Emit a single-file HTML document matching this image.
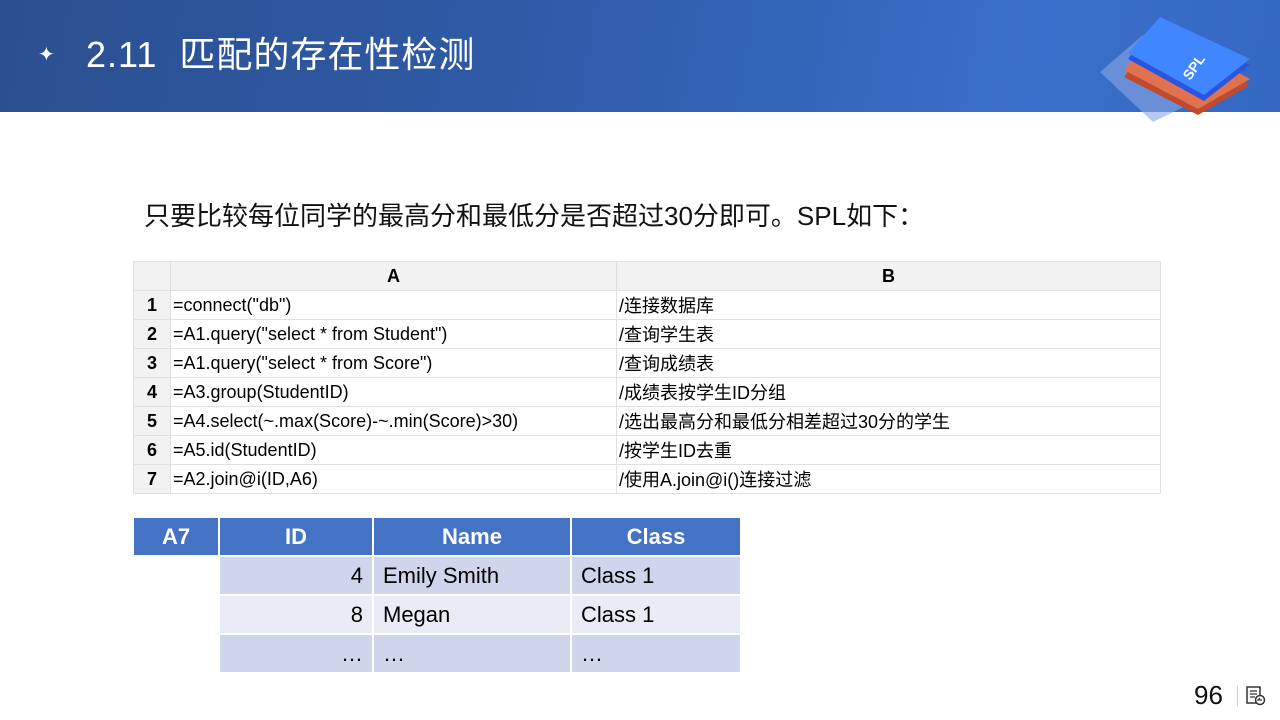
<!DOCTYPE html>
<html><head><meta charset="utf-8"><style>
*{margin:0;padding:0;box-sizing:border-box}
body{width:1280px;height:720px;position:relative;background:#fff;font-family:"Liberation Sans","Noto Sans CJK SC",sans-serif;overflow:hidden}
.hdr{position:absolute;left:0;top:0;width:1280px;height:112px;background:linear-gradient(100deg,#2b5090 0%,#2f5aa6 40%,#3a6fca 80%,#3468c2 100%)}
.title{position:absolute;left:86px;top:26px;color:#fff;font-size:36px;letter-spacing:1px}
.star{position:absolute;left:38px;top:42px;color:#fff;font-size:20px}
.intro{position:absolute;left:144px;top:196px;font-size:26px;color:#111}
.g{position:absolute;left:133px;top:261px;border-collapse:collapse;font-size:18px;color:#000}
.g td{border:1px solid #e0e0e0;height:29px;padding:0 2px;white-space:nowrap}
.g tr:first-child td{background:#f2f2f2;text-align:center;font-weight:bold}
.g td.n{background:#f2f2f2;text-align:center;font-weight:bold;width:37px}
.r{position:absolute;left:134px;top:518px;border-collapse:separate;border-spacing:2px;font-size:22px;font-family:"Liberation Sans",Arial,sans-serif;margin:-2px}
.r td{height:37px;padding:0 9px}
.r .h td{background:#4472c4;color:#fff;font-weight:bold;text-align:center}
.r .a td.c{background:#cfd5ea}.r .b td.c{background:#e9ebf5}
</style></head><body>
<div class="hdr"></div>
<div class="star">✦</div>
<div class="title">2.11&nbsp; 匹配的存在性检测</div>
<svg style="position:absolute;left:1098px;top:15px" width="160" height="110" viewBox="0 0 160 110">
<polygon points="2,57 45,20 100,85 55,107" fill="#8aa6e6" opacity=".6"/>
<polygon points="26,62 60,20 152,70 100,100" fill="#c04a30"/>
<polygon points="26,55 60,14 152,64 100,94" fill="#e0724f"/>
<polygon points="30,44 62,2 152,50 106,86" fill="#2b55e0"/>
<polygon points="30,38 62,2 152,44 106,80" fill="#3f86ff"/>
<text x="92" y="66" fill="#fff" font-size="14" font-weight="bold" transform="rotate(-55 92 66)">SPL</text>
</svg>
<div class="intro">只要比较每位同学的最高分和最低分是否超过30分即可。SPL如下：</div>
<table class="g">
<tr><td style="width:37px"></td><td style="width:446px">A</td><td style="width:544px">B</td></tr>
<tr><td class="n">1</td><td>=connect("db")</td><td>/连接数据库</td></tr>
<tr><td class="n">2</td><td>=A1.query("select * from Student")</td><td>/查询学生表</td></tr>
<tr><td class="n">3</td><td>=A1.query("select * from Score")</td><td>/查询成绩表</td></tr>
<tr><td class="n">4</td><td>=A3.group(StudentID)</td><td>/成绩表按学生ID分组</td></tr>
<tr><td class="n">5</td><td>=A4.select(~.max(Score)-~.min(Score)&gt;30)</td><td>/选出最高分和最低分相差超过30分的学生</td></tr>
<tr><td class="n">6</td><td>=A5.id(StudentID)</td><td>/按学生ID去重</td></tr>
<tr><td class="n">7</td><td>=A2.join@i(ID,A6)</td><td>/使用A.join@i()连接过滤</td></tr>
</table>
<table class="r">
<tr class="h"><td style="width:84px">A7</td><td style="width:152px">ID</td><td style="width:196px">Name</td><td style="width:168px">Class</td></tr>
<tr class="a"><td></td><td class="c" style="text-align:right">4</td><td class="c">Emily Smith</td><td class="c">Class 1</td></tr>
<tr class="b"><td></td><td class="c" style="text-align:right">8</td><td class="c">Megan</td><td class="c">Class 1</td></tr>
<tr class="a"><td></td><td class="c" style="text-align:right">…</td><td class="c">…</td><td class="c">…</td></tr>
</table>
<div style="position:absolute;left:1194px;top:680px;font-size:26px;color:#111">96</div>
<div style="position:absolute;left:1237px;top:686px;width:1px;height:20px;background:#c8d0e0"></div>
<svg style="position:absolute;left:1245px;top:685px" width="22" height="22" viewBox="0 0 22 22"><rect x="2" y="2" width="13" height="16" fill="none" stroke="#333" stroke-width="1.5"/><path d="M5 6h7M5 9h7M5 12h5" stroke="#333" stroke-width="1.2"/><circle cx="15" cy="15" r="4.5" fill="#fff" stroke="#333" stroke-width="1.5"/><path d="M17 15h-4l2-2" fill="none" stroke="#333" stroke-width="1.2"/></svg>
</body></html>
